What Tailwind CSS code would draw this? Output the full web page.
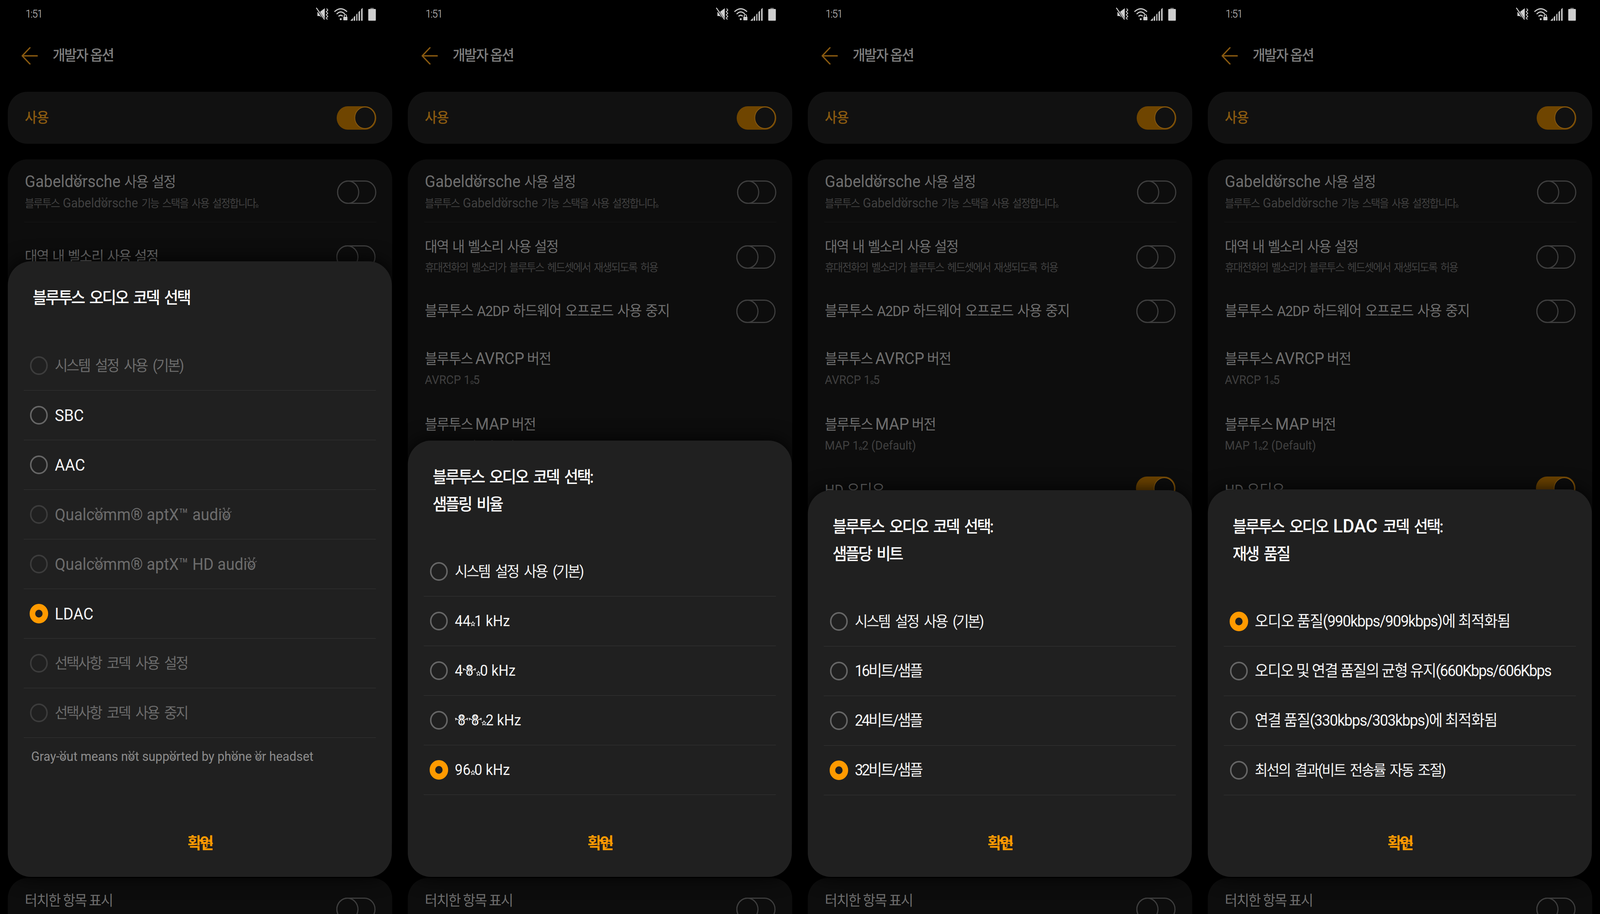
<!doctype html>
<html lang="ko">
<head>
<meta charset="utf-8">
<script src="https://cdn.jsdelivr.net/npm/@tailwindcss/browser@4"></script>
<title>Bluetooth codec</title>
</head>
<body class="m-0 bg-black overflow-hidden font-['Roboto','Noto_Sans_CJK_KR',sans-serif]">
<svg class="absolute w-0 h-0" aria-hidden="true">
  <symbol id="deer" viewBox="0 0 60 72"><g fill="none" stroke="currentColor" stroke-width="4" stroke-linecap="round"><path d="M21 20 L16 2 M17.5 9 L9 5 M39 20 L44 2 M42.5 9 L51 5 M8 28 L0 24 M52 28 L60 24"/><circle cx="22" cy="42" r="1.5"/><circle cx="38" cy="42" r="1.5"/><ellipse cx="30" cy="54" rx="6" ry="4"/></g></symbol>
  <symbol id="snow" viewBox="0 0 76 76"><g fill="none" stroke="currentColor" stroke-width="4" stroke-linecap="round"><path d="M2 40 L22 48 M74 40 L54 48 M5 49 L7 39 M71 49 L69 39 M32 37 Q38 41 44 37"/><circle cx="33" cy="29" r="1.4"/><circle cx="43" cy="29" r="1.4"/><circle cx="38" cy="56" r="1.4"/><circle cx="38" cy="66" r="1.4"/></g></symbol>
  <symbol id="star" viewBox="0 0 24 24"><path d="M12 2 L15 9 L22 9.5 L16.5 14 L18.5 22 L12 17.5 L5.5 22 L7.5 14 L2 9.5 L9 9 Z" fill="none" stroke="currentColor" stroke-width="2.6" stroke-linejoin="round"/></symbol>
  <symbol id="santa" viewBox="0 0 40 40"><g fill="none" stroke="currentColor" stroke-width="2.6" stroke-linecap="round"><path d="M2 15 Q14 9 26 15 M3 20 H25"/><circle cx="10" cy="24" r="1"/><circle cx="18" cy="24" r="1"/><path d="M9 28 Q14 33 19 28"/><path d="M25 11 L33 20"/></g></symbol>
  <symbol id="mute" viewBox="0 0 36 34"><path d="M5 12 H11 L25 2 V32 L11 22 H5 Z" fill="currentColor"/><path d="M1 0 L24 32" stroke="#000" stroke-width="5"/><path d="M2 1 L24 31" stroke="currentColor" stroke-width="2.4"/><path d="M30 3 L33 7 L29 11 L33 15 L29 19 L33 23 L29 27 L32 31" fill="none" stroke="currentColor" stroke-width="2.2"/></symbol>
  <symbol id="wifi" viewBox="0 0 40 34"><g fill="none" stroke="currentColor" stroke-width="3"><path d="M2 11 Q19 -4 36 11"/><path d="M8 17 Q19 6 30 17"/><path d="M13 23 Q19 17 25 23"/></g><circle cx="19" cy="30" r="2.6" fill="currentColor"/><path d="M24 22 H39 V34 H24 Z" fill="#000"/><rect x="26" y="24" width="11" height="9" rx="1" fill="currentColor"/><path d="M28.5 24 V21.5 a3 3 0 0 1 6 0 V24" fill="none" stroke="currentColor" stroke-width="2"/></symbol>
  <symbol id="signal" viewBox="0 0 34 33"><path d="M0 33 L7 26 V33 Z M9 24 L13 20 V33 H9 Z M16 17 L19 14 V33 H16 Z M22 11 L26 7 V33 H22 Z M29 4 L33 0 V33 H29 Z" fill="currentColor"/></symbol>
  <symbol id="batt" viewBox="0 0 21 33"><rect x="6" y="0" width="9" height="4" fill="#666"/><rect x="0" y="3" width="21" height="30" rx="2" fill="currentColor"/></symbol>
  <symbol id="back" viewBox="0 0 44 44"><path d="M23 1 L2 22 L23 43 M2 22 H43" fill="none" stroke="currentColor" stroke-width="3.4" stroke-linecap="round" stroke-linejoin="round"/></symbol>
</svg>

<div class="grid grid-cols-[repeat(4,1080px)] w-[4320px] h-[2340px] origin-top-left scale-x-[0.94815]">

<!-- PANEL 1 -->
<section class="relative h-[2340px] overflow-hidden bg-black">
  <div class="flex items-center justify-between h-[72px] pl-[69px] pr-[65px] text-[#cfcfcf]">
    <span class="text-[27px] font-light tracking-[-0.05em]">1:51</span>
    <div class="flex items-center">
      <svg class="w-[36px] h-[34px]"><use href="#mute"/></svg>
      <svg class="w-[40px] h-[34px] ml-[13px]"><use href="#wifi"/></svg>
      <svg class="w-[34px] h-[33px] ml-[5px]"><use href="#signal"/></svg>
      <svg class="w-[21px] h-[33px] ml-[14px]"><use href="#batt"/></svg>
    </div>
  </div>
  <div class="flex items-center h-[142px] pl-[58px] gap-[40px] mb-[21px]">
    <svg class="w-[44px] h-[44px] text-[#8a5a10]"><use href="#back"/></svg>
    <span class="text-[37px] font-medium tracking-[-2.5px] text-[#7e7e7e]">개발자 옵션</span>
  </div>
  <div class="flex items-center justify-between mx-[21px] h-[133px] pl-[46px] pr-[43px] rounded-[52px] bg-[#111111]">
    <span class="text-[36px] font-medium tracking-[-1px] text-[#8a5a10]">사용</span>
    <div class="flex justify-end items-center w-[107px] h-[60px] rounded-full bg-[#6f4500]"><div class="w-[57px] h-[57px] mr-[2px] rounded-full bg-[#111111] border-2 border-[#8a5a10]"></div></div>
  </div>
  <div class="mt-[40px] mx-[21px] h-[1800px] rounded-[52px] bg-[#0d0d0d] pl-[46px] pr-[45px]">
    <div class="flex items-center justify-between h-[161px] pt-[7px] -mx-[2px] border-b border-[#171717]">
      <div class="pl-[2px]"><p class="text-[37px] leading-[46px] tracking-[-2.1px] [word-spacing:3px] text-[#6e6e6e]"><span class="text-[42px] tracking-normal">Gabeld<span class="relative">o<svg class="absolute left-[-0.05em] bottom-[0.23em] w-[0.68em] h-[0.78em]"><use href="#deer"/></svg></span>rsche</span> 사용 설정</p><p class="mt-[10px] text-[28px] leading-[40px] tracking-[-2.5px] [word-spacing:5px] text-[#404040]">블루투스 <span class="text-[33px] tracking-normal">Gabeld<span class="relative">o<svg class="absolute left-[-0.05em] bottom-[0.23em] w-[0.68em] h-[0.78em]"><use href="#deer"/></svg></span>rsche</span> 기능 스택을 사용 설정합니다<span class="relative text-transparent">.<svg class="absolute left-[-0.03em] bottom-[0.2em] w-[0.36em] h-[0.36em] text-[#404040]"><use href="#star"/></svg></span></p></div>
      <div class="flex w-[106px] h-[60px] rounded-full border-[3px] border-[#3e3e3e]"><div class="w-[60px] h-[60px] -m-[3px] shrink-0 rounded-full border-[3px] border-[#3e3e3e]"></div></div>
    </div>
    <div class="flex items-center justify-between h-[166px] pt-[12px]">
      <div><p class="text-[37px] leading-[46px] tracking-[-2.1px] [word-spacing:3px] text-[#6e6e6e]">대역 내 벨소리 사용 설정</p></div>
      <div class="flex w-[106px] h-[60px] rounded-full border-[3px] border-[#3e3e3e]"><div class="w-[60px] h-[60px] -m-[3px] shrink-0 rounded-full border-[3px] border-[#3e3e3e]"></div></div>
    </div>
  </div>
  <div class="flex items-start justify-between mx-[21px] mt-[40px] h-[160px] pt-[39px] pl-[46px] pr-[45px] rounded-t-[52px] bg-[#0d0d0d]">
    <p class="text-[37px] leading-[40px] tracking-[-2.2px] text-[#6e6e6e]">터치한 항목 표시</p>
    <div class="flex w-[106px] h-[60px] mt-[11px] rounded-full border-[3px] border-[#3e3e3e]"><div class="w-[60px] h-[60px] -m-[3px] shrink-0 rounded-full border-[3px] border-[#3e3e3e]"></div></div>
  </div>

  <div class="absolute left-[21px] right-[22px] bottom-[95px] rounded-[62px] bg-[#202020] pt-[59px] shadow-[0_0_50px_rgba(0,0,0,0.9)]">
    <h2 class="pl-[67px] text-[42px] leading-[70px] font-medium tracking-[-4px] [word-spacing:8px] text-white">블루투스 오디오 코덱 선택</h2>
    <div class="mt-[75px] mx-[43px]">
      <div class="flex items-center h-[127px] pl-[17px] gap-[19px] border-b border-[#363636] text-[#6c6c6c] text-[38px] tracking-[-3.6px] [word-spacing:9px]"><span class="w-12 h-12 rounded-full border-[4px] border-[#3c3c3c]"></span>시스템 설정 사용 (기본)</div>
      <div class="flex items-center h-[127px] pl-[17px] gap-[19px] border-b border-[#363636] text-[#f4f4f4] text-[42px]"><span class="w-12 h-12 rounded-full border-[4px] border-[#666666]"></span>SBC</div>
      <div class="flex items-center h-[127px] pl-[17px] gap-[19px] border-b border-[#363636] text-[#f4f4f4] text-[42px]"><span class="w-12 h-12 rounded-full border-[4px] border-[#666666]"></span>AAC</div>
      <div class="flex items-center h-[127px] pl-[17px] gap-[19px] border-b border-[#363636] text-[#6c6c6c] text-[42px]"><span class="w-12 h-12 rounded-full border-[4px] border-[#3c3c3c]"></span><span>Qualc<span class="relative">o<svg class="absolute left-[-0.05em] bottom-[0.23em] w-[0.68em] h-[0.78em]"><use href="#deer"/></svg></span>mm® aptX™ audi<span class="relative">o<svg class="absolute left-[-0.05em] bottom-[0.23em] w-[0.68em] h-[0.78em]"><use href="#deer"/></svg></span></span></div>
      <div class="flex items-center h-[127px] pl-[17px] gap-[19px] border-b border-[#363636] text-[#6c6c6c] text-[42px]"><span class="w-12 h-12 rounded-full border-[4px] border-[#3c3c3c]"></span><span>Qualc<span class="relative">o<svg class="absolute left-[-0.05em] bottom-[0.23em] w-[0.68em] h-[0.78em]"><use href="#deer"/></svg></span>mm® aptX™ HD audi<span class="relative">o<svg class="absolute left-[-0.05em] bottom-[0.23em] w-[0.68em] h-[0.78em]"><use href="#deer"/></svg></span></span></div>
      <div class="flex items-center h-[127px] pl-[17px] gap-[19px] border-b border-[#363636] text-[#f4f4f4] text-[42px]"><span class="w-[50px] h-[50px] -mx-px rounded-full border-[15px] border-[#ff9a00] bg-[#202020]"></span>LDAC</div>
      <div class="flex items-center h-[127px] pl-[17px] gap-[19px] border-b border-[#363636] text-[#6c6c6c] text-[38px] tracking-[-3.6px] [word-spacing:9px]"><span class="w-12 h-12 rounded-full border-[4px] border-[#3c3c3c]"></span>선택사항 코덱 사용 설정</div>
      <div class="flex items-center h-[127px] pl-[17px] gap-[19px] border-b border-[#363636] text-[#6c6c6c] text-[38px] tracking-[-3.6px] [word-spacing:9px]"><span class="w-12 h-12 rounded-full border-[4px] border-[#3c3c3c]"></span>선택사항 코덱 사용 중지</div>
    </div>
    <p class="h-[211px] pl-[63px] pt-[26px] text-[33.5px] leading-[44px] text-[#8c8c8c]">Gray-<span class="relative">o<svg class="absolute left-[-0.05em] bottom-[0.23em] w-[0.68em] h-[0.78em]"><use href="#deer"/></svg></span>ut means n<span class="relative">o<svg class="absolute left-[-0.05em] bottom-[0.23em] w-[0.68em] h-[0.78em]"><use href="#deer"/></svg></span>t supp<span class="relative">o<svg class="absolute left-[-0.05em] bottom-[0.23em] w-[0.68em] h-[0.78em]"><use href="#deer"/></svg></span>rted by ph<span class="relative">o<svg class="absolute left-[-0.05em] bottom-[0.23em] w-[0.68em] h-[0.78em]"><use href="#deer"/></svg></span>ne <span class="relative">o<svg class="absolute left-[-0.05em] bottom-[0.23em] w-[0.68em] h-[0.78em]"><use href="#deer"/></svg></span>r headset</p>
    <div class="flex items-center justify-center h-[120px] mb-[25px] text-[41px] font-bold tracking-[-5px] text-[#ff9a00]"><span>확<span class="relative">인<svg class="absolute left-0 top-[0.08em] w-[1em] h-[1em]"><use href="#santa"/></svg></span></span></div>
  </div>
</section>

<!-- PANEL 2 -->
<section class="relative h-[2340px] overflow-hidden bg-black">
  <div class="flex items-center justify-between h-[72px] pl-[69px] pr-[65px] text-[#cfcfcf]">
    <span class="text-[27px] font-light tracking-[-0.05em]">1:51</span>
    <div class="flex items-center">
      <svg class="w-[36px] h-[34px]"><use href="#mute"/></svg>
      <svg class="w-[40px] h-[34px] ml-[13px]"><use href="#wifi"/></svg>
      <svg class="w-[34px] h-[33px] ml-[5px]"><use href="#signal"/></svg>
      <svg class="w-[21px] h-[33px] ml-[14px]"><use href="#batt"/></svg>
    </div>
  </div>
  <div class="flex items-center h-[142px] pl-[58px] gap-[40px] mb-[21px]">
    <svg class="w-[44px] h-[44px] text-[#8a5a10]"><use href="#back"/></svg>
    <span class="text-[37px] font-medium tracking-[-2.5px] text-[#7e7e7e]">개발자 옵션</span>
  </div>
  <div class="flex items-center justify-between mx-[21px] h-[133px] pl-[46px] pr-[43px] rounded-[52px] bg-[#111111]">
    <span class="text-[36px] font-medium tracking-[-1px] text-[#8a5a10]">사용</span>
    <div class="flex justify-end items-center w-[107px] h-[60px] rounded-full bg-[#6f4500]"><div class="w-[57px] h-[57px] mr-[2px] rounded-full bg-[#111111] border-2 border-[#8a5a10]"></div></div>
  </div>
  <div class="mt-[40px] mx-[21px] h-[1800px] rounded-[52px] bg-[#0d0d0d] pl-[46px] pr-[45px]">
    <div class="flex items-center justify-between h-[161px] pt-[7px] -mx-[2px] border-b border-[#171717]">
      <div class="pl-[2px]"><p class="text-[37px] leading-[46px] tracking-[-2.1px] [word-spacing:3px] text-[#6e6e6e]"><span class="text-[42px] tracking-normal">Gabeld<span class="relative">o<svg class="absolute left-[-0.05em] bottom-[0.23em] w-[0.68em] h-[0.78em]"><use href="#deer"/></svg></span>rsche</span> 사용 설정</p><p class="mt-[10px] text-[28px] leading-[40px] tracking-[-2.5px] [word-spacing:5px] text-[#404040]">블루투스 <span class="text-[33px] tracking-normal">Gabeld<span class="relative">o<svg class="absolute left-[-0.05em] bottom-[0.23em] w-[0.68em] h-[0.78em]"><use href="#deer"/></svg></span>rsche</span> 기능 스택을 사용 설정합니다<span class="relative text-transparent">.<svg class="absolute left-[-0.03em] bottom-[0.2em] w-[0.36em] h-[0.36em] text-[#404040]"><use href="#star"/></svg></span></p></div>
      <div class="flex w-[106px] h-[60px] rounded-full border-[3px] border-[#3e3e3e]"><div class="w-[60px] h-[60px] -m-[3px] shrink-0 rounded-full border-[3px] border-[#3e3e3e]"></div></div>
    </div>
    <div class="flex items-center justify-between h-[166px] pt-[12px]">
      <div><p class="text-[37px] leading-[46px] tracking-[-2.1px] [word-spacing:3px] text-[#6e6e6e]">대역 내 벨소리 사용 설정</p><p class="mt-[10px] text-[28px] leading-[40px] tracking-[-2.5px] [word-spacing:5px] text-[#404040]">휴대전화의 벨소리가 블루투스 헤드셋에서 재생되도록 허용</p></div>
      <div class="flex w-[106px] h-[60px] rounded-full border-[3px] border-[#3e3e3e]"><div class="w-[60px] h-[60px] -m-[3px] shrink-0 rounded-full border-[3px] border-[#3e3e3e]"></div></div>
    </div>
    <div class="flex items-center justify-between h-[124px]">
      <p class="text-[37px] leading-[46px] tracking-[-1.5px] [word-spacing:3px] text-[#6e6e6e]">블루투스 A2DP 하드웨어 오프로드 사용 중지</p>
      <div class="flex w-[106px] h-[60px] rounded-full border-[3px] border-[#3e3e3e]"><div class="w-[60px] h-[60px] -m-[3px] shrink-0 rounded-full border-[3px] border-[#3e3e3e]"></div></div>
    </div>
    <div class="flex items-center h-[166px] pt-[3px]">
      <div><p class="text-[37px] leading-[46px] tracking-[-1.8px] text-[#6e6e6e]">블루투스 <span class="text-[42px] tracking-normal">AVRCP</span> 버전</p><p class="mt-[10px] text-[31px] leading-[40px] text-[#404040]">AVRCP 1<span class="relative text-transparent">.<svg class="absolute left-[-0.03em] bottom-[0.2em] w-[0.36em] h-[0.36em] text-[#404040]"><use href="#star"/></svg></span>5</p></div>
    </div>
    <div class="flex items-center h-[166px] pt-[8px]">
      <div><p class="text-[37px] leading-[46px] tracking-[-1.8px] text-[#6e6e6e]">블루투스 <span class="text-[42px] tracking-normal">MAP</span> 버전</p><p class="mt-[10px] text-[31px] leading-[40px] text-[#404040]">MAP 1<span class="relative text-transparent">.<svg class="absolute left-[-0.03em] bottom-[0.2em] w-[0.36em] h-[0.36em] text-[#404040]"><use href="#star"/></svg></span>2 (Default)</p></div>
    </div>
  </div>
  <div class="flex items-start justify-between mx-[21px] mt-[40px] h-[160px] pt-[39px] pl-[46px] pr-[45px] rounded-t-[52px] bg-[#0d0d0d]">
    <p class="text-[37px] leading-[40px] tracking-[-2.2px] text-[#6e6e6e]">터치한 항목 표시</p>
    <div class="flex w-[106px] h-[60px] mt-[11px] rounded-full border-[3px] border-[#3e3e3e]"><div class="w-[60px] h-[60px] -m-[3px] shrink-0 rounded-full border-[3px] border-[#3e3e3e]"></div></div>
  </div>

  <div class="absolute left-[21px] right-[22px] bottom-[95px] rounded-[62px] bg-[#202020] pt-[59px] shadow-[0_0_50px_rgba(0,0,0,0.9)]">
    <h2 class="pl-[67px] text-[42px] leading-[70px] font-medium tracking-[-4px] [word-spacing:8px] text-white">블루투스 오디오 코덱 선택:<br>샘플링 비율</h2>
    <div class="mt-[73px] mx-[43px]">
      <div class="flex items-center h-[127px] pl-[17px] gap-[19px] border-b border-[#363636] text-[#f4f4f4] text-[38px] tracking-[-3.6px] [word-spacing:9px]"><span class="w-12 h-12 rounded-full border-[4px] border-[#666666]"></span>시스템 설정 사용 (기본)</div>
      <div class="flex items-center h-[127px] pl-[17px] gap-[19px] border-b border-[#363636] text-[#f4f4f4] text-[38px]"><span class="w-12 h-12 rounded-full border-[4px] border-[#666666]"></span><span>44<span class="relative text-transparent">.<svg class="absolute left-[-0.03em] bottom-[0.2em] w-[0.36em] h-[0.36em] text-[#f4f4f4]"><use href="#star"/></svg></span>1 kHz</span></div>
      <div class="flex items-center h-[127px] pl-[17px] gap-[19px] border-b border-[#363636] text-[#f4f4f4] text-[38px]"><span class="w-12 h-12 rounded-full border-[4px] border-[#666666]"></span><span>4<span class="relative px-[0.2em]">8<svg class="absolute left-0 bottom-[0.24em] w-[0.96em] h-[0.96em]"><use href="#snow"/></svg></span><span class="relative text-transparent">.<svg class="absolute left-[-0.03em] bottom-[0.2em] w-[0.36em] h-[0.36em] text-[#f4f4f4]"><use href="#star"/></svg></span>0 kHz</span></div>
      <div class="flex items-center h-[127px] pl-[17px] gap-[19px] border-b border-[#363636] text-[#f4f4f4] text-[38px]"><span class="w-12 h-12 rounded-full border-[4px] border-[#666666]"></span><span><span class="relative px-[0.2em]">8<svg class="absolute left-0 bottom-[0.24em] w-[0.96em] h-[0.96em]"><use href="#snow"/></svg></span><span class="relative px-[0.2em]">8<svg class="absolute left-0 bottom-[0.24em] w-[0.96em] h-[0.96em]"><use href="#snow"/></svg></span><span class="relative text-transparent">.<svg class="absolute left-[-0.03em] bottom-[0.2em] w-[0.36em] h-[0.36em] text-[#f4f4f4]"><use href="#star"/></svg></span>2 kHz</span></div>
      <div class="flex items-center h-[127px] pl-[17px] gap-[19px] border-b border-[#363636] text-[#f4f4f4] text-[38px]"><span class="w-[50px] h-[50px] -mx-px rounded-full border-[15px] border-[#ff9a00] bg-[#202020]"></span><span>96<span class="relative text-transparent">.<svg class="absolute left-[-0.03em] bottom-[0.2em] w-[0.36em] h-[0.36em] text-[#f4f4f4]"><use href="#star"/></svg></span>0 kHz</span></div>
    </div>
    <div class="flex items-center justify-center mt-[65px] h-[120px] mb-[25px] text-[41px] font-bold tracking-[-5px] text-[#ff9a00]"><span>확<span class="relative">인<svg class="absolute left-0 top-[0.08em] w-[1em] h-[1em]"><use href="#santa"/></svg></span></span></div>
  </div>
</section>

<!-- PANEL 3 -->
<section class="relative h-[2340px] overflow-hidden bg-black">
  <div class="flex items-center justify-between h-[72px] pl-[69px] pr-[65px] text-[#cfcfcf]">
    <span class="text-[27px] font-light tracking-[-0.05em]">1:51</span>
    <div class="flex items-center">
      <svg class="w-[36px] h-[34px]"><use href="#mute"/></svg>
      <svg class="w-[40px] h-[34px] ml-[13px]"><use href="#wifi"/></svg>
      <svg class="w-[34px] h-[33px] ml-[5px]"><use href="#signal"/></svg>
      <svg class="w-[21px] h-[33px] ml-[14px]"><use href="#batt"/></svg>
    </div>
  </div>
  <div class="flex items-center h-[142px] pl-[58px] gap-[40px] mb-[21px]">
    <svg class="w-[44px] h-[44px] text-[#8a5a10]"><use href="#back"/></svg>
    <span class="text-[37px] font-medium tracking-[-2.5px] text-[#7e7e7e]">개발자 옵션</span>
  </div>
  <div class="flex items-center justify-between mx-[21px] h-[133px] pl-[46px] pr-[43px] rounded-[52px] bg-[#111111]">
    <span class="text-[36px] font-medium tracking-[-1px] text-[#8a5a10]">사용</span>
    <div class="flex justify-end items-center w-[107px] h-[60px] rounded-full bg-[#6f4500]"><div class="w-[57px] h-[57px] mr-[2px] rounded-full bg-[#111111] border-2 border-[#8a5a10]"></div></div>
  </div>
  <div class="mt-[40px] mx-[21px] h-[1800px] rounded-[52px] bg-[#0d0d0d] pl-[46px] pr-[45px]">
    <div class="flex items-center justify-between h-[161px] pt-[7px] -mx-[2px] border-b border-[#171717]">
      <div class="pl-[2px]"><p class="text-[37px] leading-[46px] tracking-[-2.1px] [word-spacing:3px] text-[#6e6e6e]"><span class="text-[42px] tracking-normal">Gabeld<span class="relative">o<svg class="absolute left-[-0.05em] bottom-[0.23em] w-[0.68em] h-[0.78em]"><use href="#deer"/></svg></span>rsche</span> 사용 설정</p><p class="mt-[10px] text-[28px] leading-[40px] tracking-[-2.5px] [word-spacing:5px] text-[#404040]">블루투스 <span class="text-[33px] tracking-normal">Gabeld<span class="relative">o<svg class="absolute left-[-0.05em] bottom-[0.23em] w-[0.68em] h-[0.78em]"><use href="#deer"/></svg></span>rsche</span> 기능 스택을 사용 설정합니다<span class="relative text-transparent">.<svg class="absolute left-[-0.03em] bottom-[0.2em] w-[0.36em] h-[0.36em] text-[#404040]"><use href="#star"/></svg></span></p></div>
      <div class="flex w-[106px] h-[60px] rounded-full border-[3px] border-[#3e3e3e]"><div class="w-[60px] h-[60px] -m-[3px] shrink-0 rounded-full border-[3px] border-[#3e3e3e]"></div></div>
    </div>
    <div class="flex items-center justify-between h-[166px] pt-[12px]">
      <div><p class="text-[37px] leading-[46px] tracking-[-2.1px] [word-spacing:3px] text-[#6e6e6e]">대역 내 벨소리 사용 설정</p><p class="mt-[10px] text-[28px] leading-[40px] tracking-[-2.5px] [word-spacing:5px] text-[#404040]">휴대전화의 벨소리가 블루투스 헤드셋에서 재생되도록 허용</p></div>
      <div class="flex w-[106px] h-[60px] rounded-full border-[3px] border-[#3e3e3e]"><div class="w-[60px] h-[60px] -m-[3px] shrink-0 rounded-full border-[3px] border-[#3e3e3e]"></div></div>
    </div>
    <div class="flex items-center justify-between h-[124px]">
      <p class="text-[37px] leading-[46px] tracking-[-1.5px] [word-spacing:3px] text-[#6e6e6e]">블루투스 A2DP 하드웨어 오프로드 사용 중지</p>
      <div class="flex w-[106px] h-[60px] rounded-full border-[3px] border-[#3e3e3e]"><div class="w-[60px] h-[60px] -m-[3px] shrink-0 rounded-full border-[3px] border-[#3e3e3e]"></div></div>
    </div>
    <div class="flex items-center h-[166px] pt-[3px]">
      <div><p class="text-[37px] leading-[46px] tracking-[-1.8px] text-[#6e6e6e]">블루투스 <span class="text-[42px] tracking-normal">AVRCP</span> 버전</p><p class="mt-[10px] text-[31px] leading-[40px] text-[#404040]">AVRCP 1<span class="relative text-transparent">.<svg class="absolute left-[-0.03em] bottom-[0.2em] w-[0.36em] h-[0.36em] text-[#404040]"><use href="#star"/></svg></span>5</p></div>
    </div>
    <div class="flex items-center h-[166px] pt-[8px]">
      <div><p class="text-[37px] leading-[46px] tracking-[-1.8px] text-[#6e6e6e]">블루투스 <span class="text-[42px] tracking-normal">MAP</span> 버전</p><p class="mt-[10px] text-[31px] leading-[40px] text-[#404040]">MAP 1<span class="relative text-transparent">.<svg class="absolute left-[-0.03em] bottom-[0.2em] w-[0.36em] h-[0.36em] text-[#404040]"><use href="#star"/></svg></span>2 (Default)</p></div>
    </div>
    <div class="flex items-center justify-between h-[118px] pt-[10px]">
      <p class="text-[37px] leading-[46px] text-[#6e6e6e]">HD 오디오</p>
      <div class="flex justify-end items-center w-[107px] h-[60px] -mt-[10px] rounded-full bg-[#6f4500]"><div class="w-[57px] h-[57px] mr-[2px] rounded-full bg-[#0d0d0d] border-2 border-[#8a5a10]"></div></div>
    </div>
  </div>
  <div class="flex items-start justify-between mx-[21px] mt-[40px] h-[160px] pt-[39px] pl-[46px] pr-[45px] rounded-t-[52px] bg-[#0d0d0d]">
    <p class="text-[37px] leading-[40px] tracking-[-2.2px] text-[#6e6e6e]">터치한 항목 표시</p>
    <div class="flex w-[106px] h-[60px] mt-[11px] rounded-full border-[3px] border-[#3e3e3e]"><div class="w-[60px] h-[60px] -m-[3px] shrink-0 rounded-full border-[3px] border-[#3e3e3e]"></div></div>
  </div>

  <div class="absolute left-[21px] right-[22px] bottom-[95px] rounded-[62px] bg-[#202020] pt-[59px] shadow-[0_0_50px_rgba(0,0,0,0.9)]">
    <h2 class="pl-[67px] text-[42px] leading-[70px] font-medium tracking-[-4px] [word-spacing:8px] text-white">블루투스 오디오 코덱 선택:<br>샘플당 비트</h2>
    <div class="mt-[74px] mx-[43px]">
      <div class="flex items-center h-[127px] pl-[17px] gap-[19px] border-b border-[#363636] text-[#f4f4f4] text-[38px] tracking-[-3.6px] [word-spacing:9px]"><span class="w-12 h-12 rounded-full border-[4px] border-[#666666]"></span>시스템 설정 사용 (기본)</div>
      <div class="flex items-center h-[127px] pl-[17px] gap-[19px] border-b border-[#363636] text-[#f4f4f4] text-[40px] tracking-[-4px]"><span class="w-12 h-12 rounded-full border-[4px] border-[#666666]"></span>16비트/샘플</div>
      <div class="flex items-center h-[127px] pl-[17px] gap-[19px] border-b border-[#363636] text-[#f4f4f4] text-[40px] tracking-[-4px]"><span class="w-12 h-12 rounded-full border-[4px] border-[#666666]"></span>24비트/샘플</div>
      <div class="flex items-center h-[127px] pl-[17px] gap-[19px] border-b border-[#363636] text-[#f4f4f4] text-[40px] tracking-[-4px]"><span class="w-[50px] h-[50px] -mx-px rounded-full border-[15px] border-[#ff9a00] bg-[#202020]"></span>32비트/샘플</div>
    </div>
    <div class="flex items-center justify-center mt-[64px] h-[120px] mb-[25px] text-[41px] font-bold tracking-[-5px] text-[#ff9a00]"><span>확<span class="relative">인<svg class="absolute left-0 top-[0.08em] w-[1em] h-[1em]"><use href="#santa"/></svg></span></span></div>
  </div>
</section>

<!-- PANEL 4 -->
<section class="relative h-[2340px] overflow-hidden bg-black">
  <div class="flex items-center justify-between h-[72px] pl-[69px] pr-[65px] text-[#cfcfcf]">
    <span class="text-[27px] font-light tracking-[-0.05em]">1:51</span>
    <div class="flex items-center">
      <svg class="w-[36px] h-[34px]"><use href="#mute"/></svg>
      <svg class="w-[40px] h-[34px] ml-[13px]"><use href="#wifi"/></svg>
      <svg class="w-[34px] h-[33px] ml-[5px]"><use href="#signal"/></svg>
      <svg class="w-[21px] h-[33px] ml-[14px]"><use href="#batt"/></svg>
    </div>
  </div>
  <div class="flex items-center h-[142px] pl-[58px] gap-[40px] mb-[21px]">
    <svg class="w-[44px] h-[44px] text-[#8a5a10]"><use href="#back"/></svg>
    <span class="text-[37px] font-medium tracking-[-2.5px] text-[#7e7e7e]">개발자 옵션</span>
  </div>
  <div class="flex items-center justify-between mx-[21px] h-[133px] pl-[46px] pr-[43px] rounded-[52px] bg-[#111111]">
    <span class="text-[36px] font-medium tracking-[-1px] text-[#8a5a10]">사용</span>
    <div class="flex justify-end items-center w-[107px] h-[60px] rounded-full bg-[#6f4500]"><div class="w-[57px] h-[57px] mr-[2px] rounded-full bg-[#111111] border-2 border-[#8a5a10]"></div></div>
  </div>
  <div class="mt-[40px] mx-[21px] h-[1800px] rounded-[52px] bg-[#0d0d0d] pl-[46px] pr-[45px]">
    <div class="flex items-center justify-between h-[161px] pt-[7px] -mx-[2px] border-b border-[#171717]">
      <div class="pl-[2px]"><p class="text-[37px] leading-[46px] tracking-[-2.1px] [word-spacing:3px] text-[#6e6e6e]"><span class="text-[42px] tracking-normal">Gabeld<span class="relative">o<svg class="absolute left-[-0.05em] bottom-[0.23em] w-[0.68em] h-[0.78em]"><use href="#deer"/></svg></span>rsche</span> 사용 설정</p><p class="mt-[10px] text-[28px] leading-[40px] tracking-[-2.5px] [word-spacing:5px] text-[#404040]">블루투스 <span class="text-[33px] tracking-normal">Gabeld<span class="relative">o<svg class="absolute left-[-0.05em] bottom-[0.23em] w-[0.68em] h-[0.78em]"><use href="#deer"/></svg></span>rsche</span> 기능 스택을 사용 설정합니다<span class="relative text-transparent">.<svg class="absolute left-[-0.03em] bottom-[0.2em] w-[0.36em] h-[0.36em] text-[#404040]"><use href="#star"/></svg></span></p></div>
      <div class="flex w-[106px] h-[60px] rounded-full border-[3px] border-[#3e3e3e]"><div class="w-[60px] h-[60px] -m-[3px] shrink-0 rounded-full border-[3px] border-[#3e3e3e]"></div></div>
    </div>
    <div class="flex items-center justify-between h-[166px] pt-[12px]">
      <div><p class="text-[37px] leading-[46px] tracking-[-2.1px] [word-spacing:3px] text-[#6e6e6e]">대역 내 벨소리 사용 설정</p><p class="mt-[10px] text-[28px] leading-[40px] tracking-[-2.5px] [word-spacing:5px] text-[#404040]">휴대전화의 벨소리가 블루투스 헤드셋에서 재생되도록 허용</p></div>
      <div class="flex w-[106px] h-[60px] rounded-full border-[3px] border-[#3e3e3e]"><div class="w-[60px] h-[60px] -m-[3px] shrink-0 rounded-full border-[3px] border-[#3e3e3e]"></div></div>
    </div>
    <div class="flex items-center justify-between h-[124px]">
      <p class="text-[37px] leading-[46px] tracking-[-1.5px] [word-spacing:3px] text-[#6e6e6e]">블루투스 A2DP 하드웨어 오프로드 사용 중지</p>
      <div class="flex w-[106px] h-[60px] rounded-full border-[3px] border-[#3e3e3e]"><div class="w-[60px] h-[60px] -m-[3px] shrink-0 rounded-full border-[3px] border-[#3e3e3e]"></div></div>
    </div>
    <div class="flex items-center h-[166px] pt-[3px]">
      <div><p class="text-[37px] leading-[46px] tracking-[-1.8px] text-[#6e6e6e]">블루투스 <span class="text-[42px] tracking-normal">AVRCP</span> 버전</p><p class="mt-[10px] text-[31px] leading-[40px] text-[#404040]">AVRCP 1<span class="relative text-transparent">.<svg class="absolute left-[-0.03em] bottom-[0.2em] w-[0.36em] h-[0.36em] text-[#404040]"><use href="#star"/></svg></span>5</p></div>
    </div>
    <div class="flex items-center h-[166px] pt-[8px]">
      <div><p class="text-[37px] leading-[46px] tracking-[-1.8px] text-[#6e6e6e]">블루투스 <span class="text-[42px] tracking-normal">MAP</span> 버전</p><p class="mt-[10px] text-[31px] leading-[40px] text-[#404040]">MAP 1<span class="relative text-transparent">.<svg class="absolute left-[-0.03em] bottom-[0.2em] w-[0.36em] h-[0.36em] text-[#404040]"><use href="#star"/></svg></span>2 (Default)</p></div>
    </div>
    <div class="flex items-center justify-between h-[118px] pt-[10px]">
      <p class="text-[37px] leading-[46px] text-[#6e6e6e]">HD 오디오</p>
      <div class="flex justify-end items-center w-[107px] h-[60px] -mt-[10px] rounded-full bg-[#6f4500]"><div class="w-[57px] h-[57px] mr-[2px] rounded-full bg-[#0d0d0d] border-2 border-[#8a5a10]"></div></div>
    </div>
  </div>
  <div class="flex items-start justify-between mx-[21px] mt-[40px] h-[160px] pt-[39px] pl-[46px] pr-[45px] rounded-t-[52px] bg-[#0d0d0d]">
    <p class="text-[37px] leading-[40px] tracking-[-2.2px] text-[#6e6e6e]">터치한 항목 표시</p>
    <div class="flex w-[106px] h-[60px] mt-[11px] rounded-full border-[3px] border-[#3e3e3e]"><div class="w-[60px] h-[60px] -m-[3px] shrink-0 rounded-full border-[3px] border-[#3e3e3e]"></div></div>
  </div>

  <div class="absolute left-[21px] right-[22px] bottom-[95px] rounded-[62px] bg-[#202020] pt-[59px] shadow-[0_0_50px_rgba(0,0,0,0.9)]">
    <h2 class="pl-[67px] text-[42px] leading-[70px] font-medium tracking-[-4px] [word-spacing:8px] text-white">블루투스 오디오 <span class="text-[48px] tracking-normal">LDAC</span> 코덱 선택:<br>재생 품질</h2>
    <div class="mt-[74px] mx-[43px]">
      <div class="flex items-center h-[127px] pl-[17px] gap-[19px] border-b border-[#363636] text-[#f4f4f4] text-[40px] tracking-[-1.7px] whitespace-nowrap"><span class="w-[50px] h-[50px] -mx-px rounded-full border-[15px] border-[#ff9a00] bg-[#202020]"></span>오디오 품질(990kbps/909kbps)에 최적화됨</div>
      <div class="flex items-center h-[127px] pl-[17px] gap-[19px] border-b border-[#363636] text-[#f4f4f4] text-[40px] tracking-[-2.2px] whitespace-nowrap"><span class="w-12 h-12 rounded-full border-[4px] border-[#666666]"></span>오디오 및 연결 품질의 균형 유지(660Kbps/606Kbps</div>
      <div class="flex items-center h-[127px] pl-[17px] gap-[19px] border-b border-[#363636] text-[#f4f4f4] text-[40px] tracking-[-1.7px] whitespace-nowrap"><span class="w-12 h-12 rounded-full border-[4px] border-[#666666]"></span>연결 품질(330kbps/303kbps)에 최적화됨</div>
      <div class="flex items-center h-[127px] pl-[17px] gap-[19px] border-b border-[#363636] text-[#f4f4f4] text-[38px] tracking-[-3.2px] [word-spacing:6px] whitespace-nowrap"><span class="w-12 h-12 rounded-full border-[4px] border-[#666666]"></span>최선의 결과(비트 전송률 자동 조절)</div>
    </div>
    <div class="flex items-center justify-center mt-[64px] h-[120px] mb-[25px] text-[41px] font-bold tracking-[-5px] text-[#ff9a00]"><span>확<span class="relative">인<svg class="absolute left-0 top-[0.08em] w-[1em] h-[1em]"><use href="#santa"/></svg></span></span></div>
  </div>
</section>

</div>
</body>
</html>
